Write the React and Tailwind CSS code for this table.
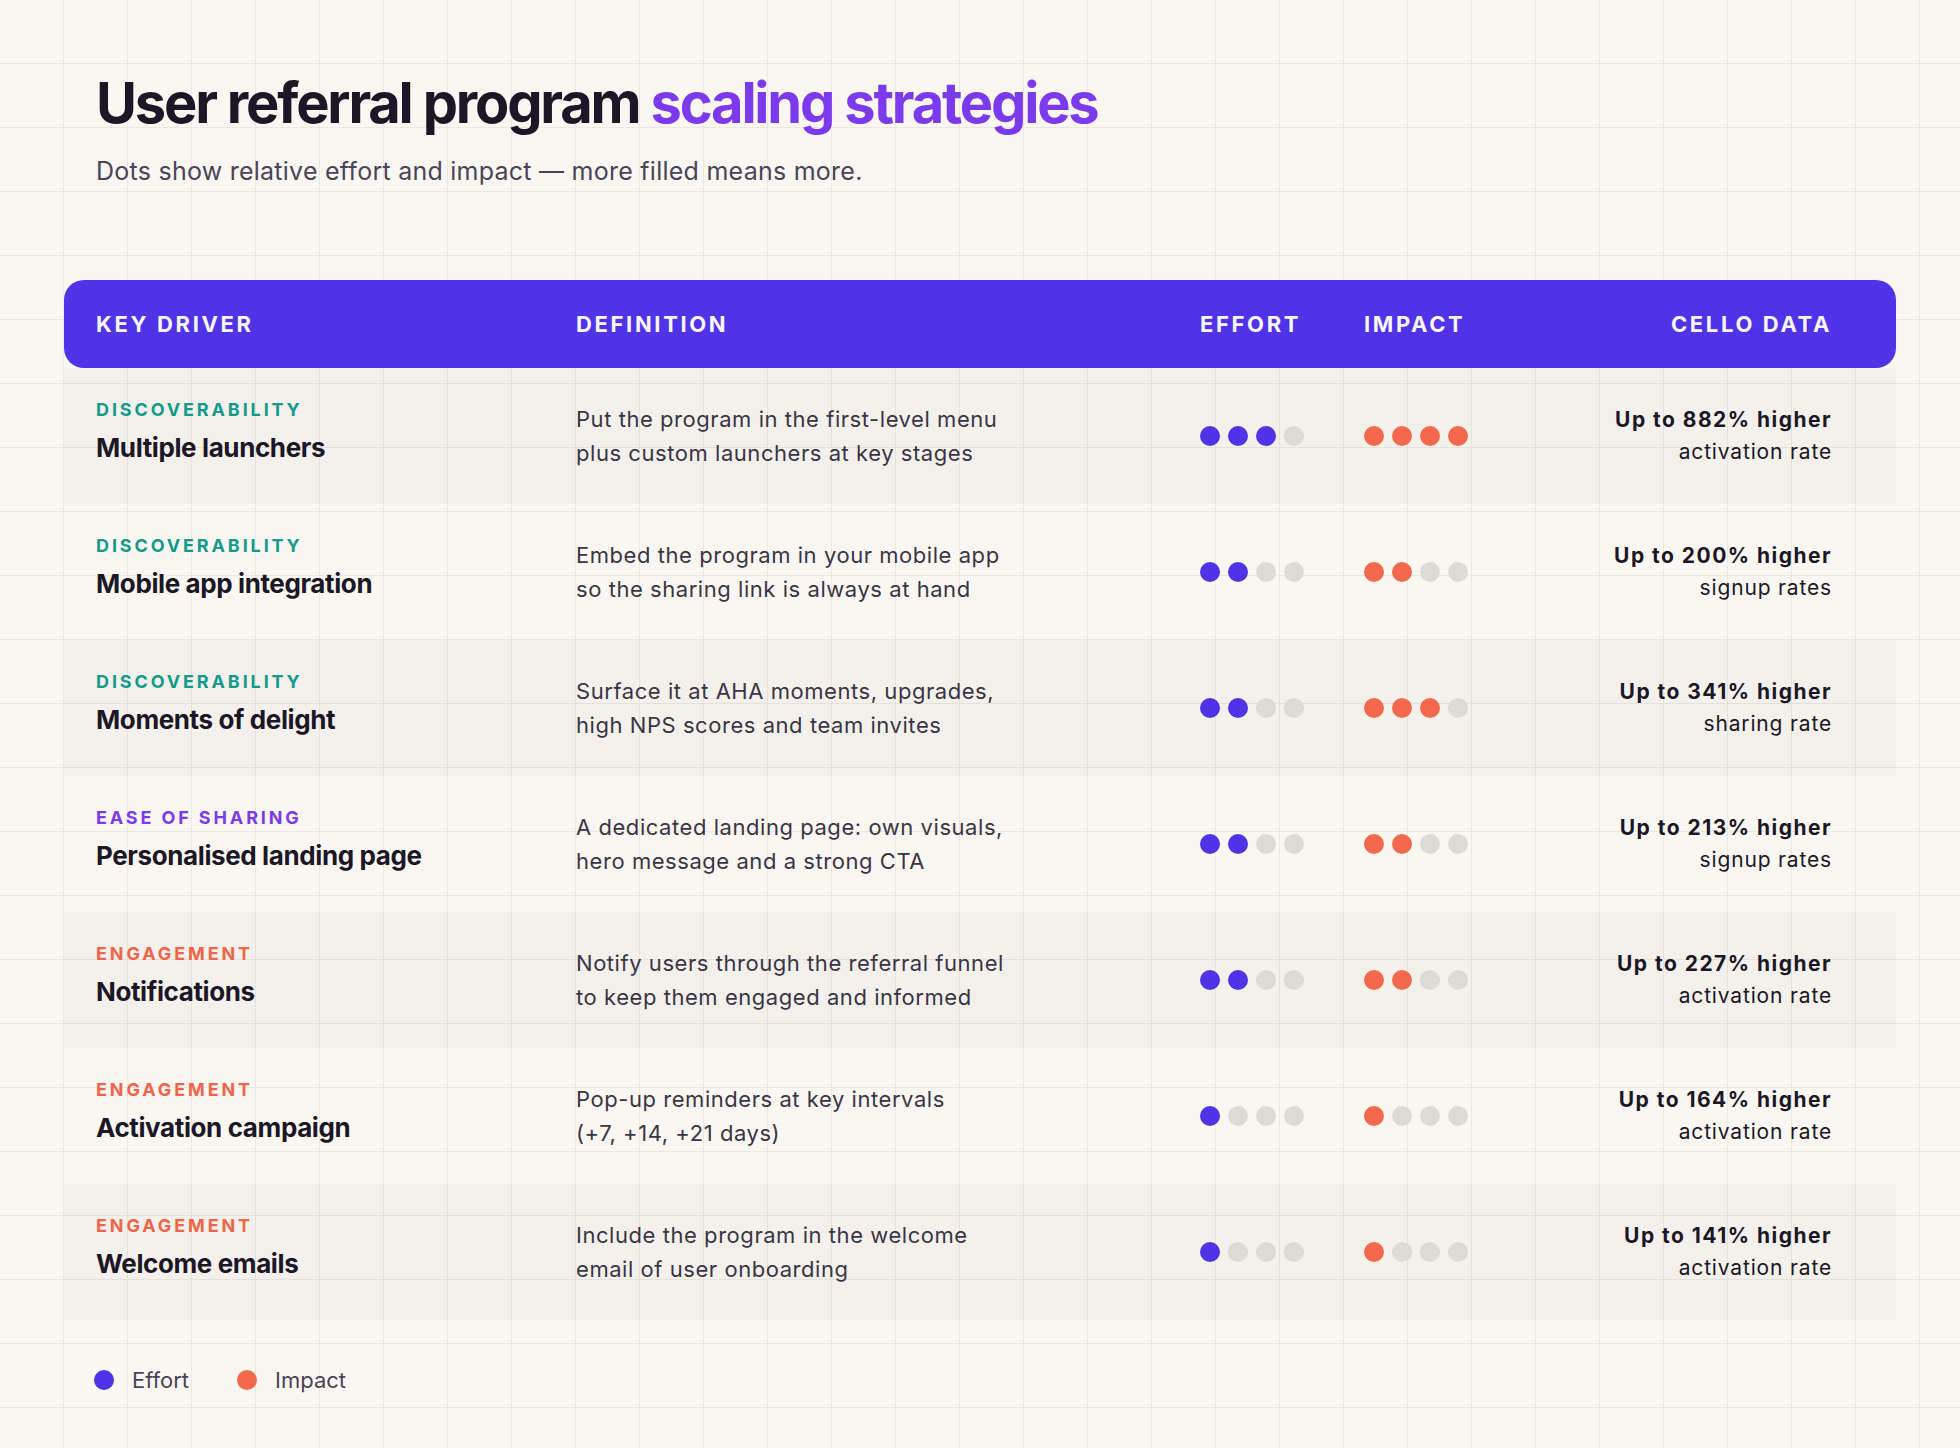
import React from "react";

const rows = [
  {
    cat: "DISCOVERABILITY",
    catColor: "text-[#139a8a]",
    title: "Multiple launchers",
    def: ["Put the program in the first-level menu", "plus custom launchers at key stages"],
    effort: 3,
    impact: 4,
    stat: "Up to 882% higher",
    sub: "activation rate",
  },
  {
    cat: "DISCOVERABILITY",
    catColor: "text-[#139a8a]",
    title: "Mobile app integration",
    def: ["Embed the program in your mobile app", "so the sharing link is always at hand"],
    effort: 2,
    impact: 2,
    stat: "Up to 200% higher",
    sub: "signup rates",
  },
  {
    cat: "DISCOVERABILITY",
    catColor: "text-[#139a8a]",
    title: "Moments of delight",
    def: ["Surface it at AHA moments, upgrades,", "high NPS scores and team invites"],
    effort: 2,
    impact: 3,
    stat: "Up to 341% higher",
    sub: "sharing rate",
  },
  {
    cat: "EASE OF SHARING",
    catColor: "text-[#7c3aed]",
    title: "Personalised landing page",
    def: ["A dedicated landing page: own visuals,", "hero message and a strong CTA"],
    effort: 2,
    impact: 2,
    stat: "Up to 213% higher",
    sub: "signup rates",
  },
  {
    cat: "ENGAGEMENT",
    catColor: "text-[#f0654a]",
    title: "Notifications",
    def: ["Notify users through the referral funnel", "to keep them engaged and informed"],
    effort: 2,
    impact: 2,
    stat: "Up to 227% higher",
    sub: "activation rate",
  },
  {
    cat: "ENGAGEMENT",
    catColor: "text-[#f0654a]",
    title: "Activation campaign",
    def: ["Pop-up reminders at key intervals", "(+7, +14, +21 days)"],
    effort: 1,
    impact: 1,
    stat: "Up to 164% higher",
    sub: "activation rate",
  },
  {
    cat: "ENGAGEMENT",
    catColor: "text-[#f0654a]",
    title: "Welcome emails",
    def: ["Include the program in the welcome", "email of user onboarding"],
    effort: 1,
    impact: 1,
    stat: "Up to 141% higher",
    sub: "activation rate",
  },
];

function Dots({ n, kind }) {
  const on = kind === "effort" ? "bg-[#5033e6]" : "bg-[#f2694d]";
  return (
    <div className="flex items-center gap-2">
      {[0, 1, 2, 3].map((i) => (
        <span
          key={i}
          className={`block h-5 w-5 rounded-full ${i < n ? on : "bg-[#dedad6]"}`}
        />
      ))}
    </div>
  );
}

export default function App() {
  return (
    <div className="min-h-[1448px] w-full bg-[#faf7f2] bg-[linear-gradient(to_right,#ece7e1_1px,transparent_1px),linear-gradient(to_bottom,#ece7e1_1px,transparent_1px)] bg-[length:64px_64px] bg-[position:-1px_-1px] font-['Inter',sans-serif] text-[#1c1726]">
      <div className="px-16 pt-[75px] pb-10">
        <div className="px-8">
          <h1 className="text-[56px] font-bold leading-none tracking-[-0.039em] text-[#1c1726]">
            User referral program <span className="text-[#7c3aed]">scaling strategies</span>
          </h1>
          <p className="mt-6 text-[25px] leading-[32px] tracking-[0.01em] text-[#4a4458]">
            Dots show relative effort and impact — more filled means more.
          </p>
        </div>

        <div className="mt-[93px]">
          <div className="grid h-[88px] grid-cols-[480px_624px_164px_1fr] items-center rounded-[20px] bg-[#5033e6] pl-8 pr-16 text-[22px] font-bold tracking-[0.12em] text-[#f7f5ff]">
            <div>KEY DRIVER</div>
            <div>DEFINITION</div>
            <div>EFFORT</div>
            <div className="flex items-center justify-between">
              <span>IMPACT</span>
              <span>CELLO DATA</span>
            </div>
          </div>

          {rows.map((r, idx) => (
            <div
              key={r.title}
              className={`grid h-[136px] grid-cols-[480px_624px_164px_1fr] items-center pl-8 pr-16 ${
                idx % 2 === 0 ? "bg-black/[0.025]" : ""
              }`}
            >
              <div className="pb-[9px]">
                <div className={`text-[18px] font-bold leading-[20px] tracking-[0.16em] ${r.catColor}`}>
                  {r.cat}
                </div>
                <div className="mt-3 text-[26px] font-bold leading-[32px] tracking-[-0.015em] text-[#1c1726]">
                  {r.title}
                </div>
              </div>
              <div className="text-[22px] leading-[34px] tracking-[0.025em] text-[#3a3545]">
                {r.def.map((l) => (
                  <div key={l}>{l}</div>
                ))}
              </div>
              <div>
                <Dots n={r.effort} kind="effort" />
              </div>
              <div className="flex items-center justify-between">
                <Dots n={r.impact} kind="impact" />
                <div className="text-right text-[21px] leading-[32px] text-[#1c1726]">
                  <div className="font-bold tracking-[0.07em]">{r.stat}</div>
                  <div className="tracking-[0.04em]">{r.sub}</div>
                </div>
              </div>
            </div>
          ))}

          <div className="mt-[46px] flex items-center pl-[30px] text-[22px] leading-[28px] text-[#4a4458]">
            <span className="block h-5 w-5 rounded-full bg-[#5033e6]" />
            <span className="ml-[18px]">Effort</span>
            <span className="ml-[48px] block h-5 w-5 rounded-full bg-[#f2694d]" />
            <span className="ml-[18px]">Impact</span>
          </div>
        </div>
      </div>
    </div>
  );
}
